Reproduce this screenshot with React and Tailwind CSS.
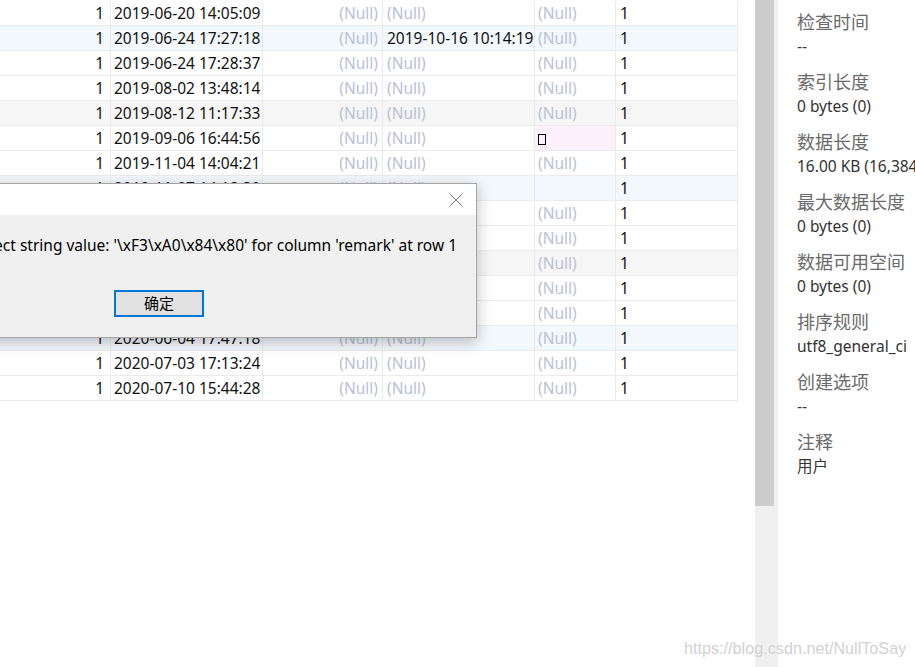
const cols = [111, 152, 120, 152, 81, 122]

const rows = [
  { t: '2019-06-20 14:05:09' },
  { t: '2019-06-24 17:27:18', c4: '2019-10-16 10:14:19', bg: 'blue' },
  { t: '2019-06-24 17:28:37' },
  { t: '2019-08-02 13:48:14' },
  { t: '2019-08-12 11:17:33', bg: 'gray' },
  { t: '2019-09-06 16:44:56', c5: 'box' },
  { t: '2019-11-04 14:04:21' },
  { t: '2019-11-07 14:18:30', c5: 'empty', bg: 'blue' },
  { t: '2019-12-02 10:21:45' },
  { t: '2020-01-08 09:33:12' },
  { t: '2020-03-16 16:05:27', bg: 'gray' },
  { t: '2020-04-21 11:42:08' },
  { t: '2020-05-19 15:26:51' },
  { t: '2020-06-04 17:47:18', bg: 'blue' },
  { t: '2020-07-03 17:13:24' },
  { t: '2020-07-10 15:44:28' },
]

const info = [
  ['检查时间', '--'],
  ['索引长度', '0 bytes (0)'],
  ['数据长度', '16.00 KB (16,384)'],
  ['最大数据长度', '0 bytes (0)'],
  ['数据可用空间', '0 bytes (0)'],
  ['排序规则', 'utf8_general_ci'],
  ['创建选项', '--'],
  ['注释', '用户'],
]

const Null = () => <span className="text-[#b9c1d6]">(Null)</span>

function Row({ r }) {
  const bg = r.bg === 'blue' ? 'bg-[#f3f8fd]' : r.bg === 'gray' ? 'bg-[#f6f6f6]' : 'bg-white'
  const cell = 'h-full pt-[2px] border-r border-[#ebebeb] overflow-hidden whitespace-nowrap flex items-center'
  return (
    <div className={`flex h-[25px] border-b border-[#ebebeb] ${bg}`}>
      <div className={`${cell} justify-end pr-[6px]`} style={{ width: cols[0] }}>1</div>
      <div className={`${cell} pl-[3px]`} style={{ width: cols[1] }}>{r.t}</div>
      <div className={`${cell} justify-end pr-[4px]`} style={{ width: cols[2] }}><Null /></div>
      <div className={`${cell} pl-[4px]`} style={{ width: cols[3] }}>{r.c4 ? r.c4 : <Null />}</div>
      {r.c5 === 'box' ? (
        <div className={`${cell} pl-[3px] bg-[#fdf0fb]`} style={{ width: cols[4] }}>
          <span className="inline-block w-[8px] h-[11px] border border-black" />
        </div>
      ) : (
        <div className={`${cell} pl-[3px]`} style={{ width: cols[4] }}>{r.c5 === 'empty' ? '' : <Null />}</div>
      )}
      <div className={`${cell} pl-[4px]`} style={{ width: cols[5] }}>1</div>
    </div>
  )
}

export default function App() {
  return (
    <div className="relative w-[915px] h-[667px] overflow-hidden flex bg-white text-[15.5px] text-[#111] font-['Noto_Sans','Noto_Sans_CJK_SC',sans-serif]">
      {/* table */}
      <div className="w-[755px] flex-shrink-0 pt-[1px]">
        <div className="w-[738px]">
          {rows.map((r, i) => <Row key={i} r={r} />)}
        </div>
      </div>

      {/* scrollbar */}
      <div className="w-[23px] flex-shrink-0 bg-[#f0f0f0]">
        <div className="w-[19px] h-[506px] bg-[#cdcdcd]" />
      </div>

      {/* info panel */}
      <div className="flex-1 pl-[19px] pt-[10px] whitespace-nowrap overflow-hidden">
        {info.map(([k, v]) => (
          <div key={k} className="h-[60px]">
            <div className="text-[18px] leading-[24px] text-[#6a6a6a]">{k}</div>
            <div className="text-[15.5px] leading-[24px] text-[#333]">{v}</div>
          </div>
        ))}
      </div>

      {/* error dialog */}
      <div className="absolute left-[-340px] top-[183px] w-[817px] h-[155px] border border-[#a5a5a5] shadow-[0_4px_14px_rgba(0,0,0,0.25)] flex flex-col bg-[#f0f0f0]">
        <div className="h-[31px] bg-white flex justify-end items-center pr-[13px]">
          <svg width="14" height="14" viewBox="0 0 14 14" stroke="#6f6f6f" strokeWidth="1">
            <path d="M1 1 L13 13 M13 1 L1 13" />
          </svg>
        </div>
        <div className="flex-1 flex flex-col">
          <div className="h-[62px] flex items-center justify-end pr-[19px] text-[15.5px] text-black whitespace-nowrap">
            1366 - Incorrect string value: '\xF3\xA0\x84\x80' for column 'remark' at row 1
          </div>
          <div className="pl-[453px] pt-[13px]">
            <button className="w-[90px] h-[27px] border-2 border-[#0078d7] bg-[#e1e1e1] text-[15px] text-black flex items-center justify-center">
              确定
            </button>
          </div>
        </div>
      </div>

      {/* watermark */}
      <div className="absolute left-[684px] top-[636px] text-[16.2px] text-[#d2d2d2] font-['Liberation_Sans',sans-serif]">
        https://blog.csdn.net/NullToSay
      </div>
    </div>
  )
}
